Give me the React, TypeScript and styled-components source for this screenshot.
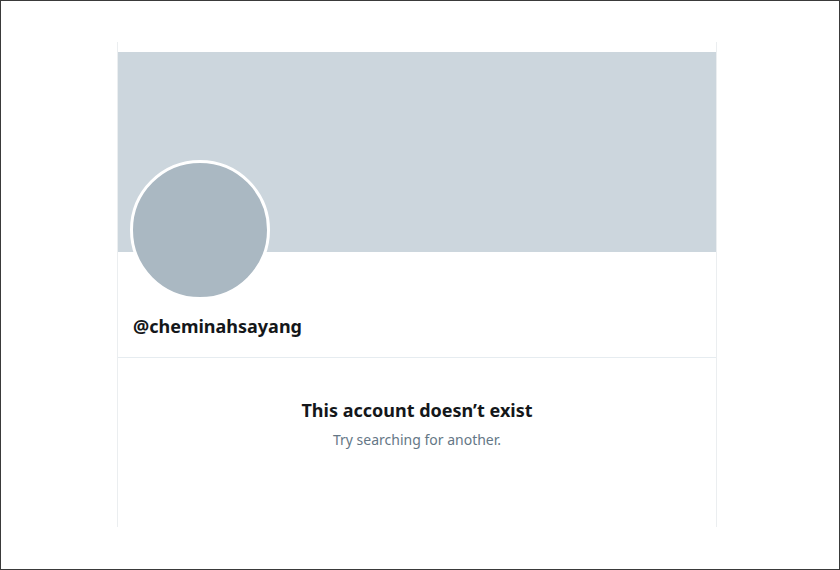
import React from "react";
import styled, { createGlobalStyle } from "styled-components";

const GlobalStyle = createGlobalStyle`
  html,
  body {
    margin: 0;
    padding: 0;
    background: #ffffff;
  }

  body {
    font-family: "Noto Sans", "Open Sans", Arial, sans-serif;
    color: #14171a;
  }
`;

const Frame = styled.div`
  box-sizing: border-box;
  width: 840px;
  height: 570px;
  border: 1px solid #3a3a3a;
  padding: 41px 0 0 116px;
  background: #ffffff;
`;

const Card = styled.main`
  box-sizing: border-box;
  width: 600px;
  height: 485px;
  padding-top: 10px;
  border-left: 1px solid #ebeef0;
  border-right: 1px solid #ebeef0;
  display: flex;
  flex-direction: column;
`;

const Banner = styled.div`
  height: 200px;
  background: #ccd6dd;
`;

const ProfileHeader = styled.section`
  display: flex;
  flex-direction: column;
  align-items: flex-start;
  padding: 0 12px 19px 12px;
  border-bottom: 1px solid #e6ecf0;
`;

const Avatar = styled.div`
  box-sizing: border-box;
  width: 140px;
  height: 140px;
  margin-top: -92px;
  border-radius: 50%;
  border: 3px solid #ffffff;
  background: #aab8c2;
`;

const Handle = styled.h2`
  margin: 14px 0 0 3px;
  font-size: 18px;
  line-height: 24px;
  font-weight: 700;
`;

const EmptyState = styled.section`
  display: flex;
  flex-direction: column;
  align-items: center;
  padding-top: 40px;
`;

const Title = styled.h1`
  margin: 0;
  font-size: 18px;
  line-height: 24px;
  font-weight: 700;
  color: #14171a;
`;

const Subtitle = styled.p`
  margin: 8px 0 0 0;
  font-size: 14px;
  line-height: 20px;
  color: #657786;
`;

const App = () => {
  return (
    <>
      <GlobalStyle />
      <Frame>
        <Card>
          <Banner />
          <ProfileHeader>
            <Avatar />
            <Handle>@cheminahsayang</Handle>
          </ProfileHeader>
          <EmptyState>
            <Title>This account doesn’t exist</Title>
            <Subtitle>Try searching for another.</Subtitle>
          </EmptyState>
        </Card>
      </Frame>
    </>
  );
};

export default App;
